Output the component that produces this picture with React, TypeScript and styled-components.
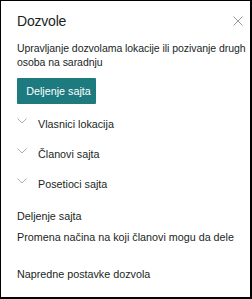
import React from 'react';
import styled, { createGlobalStyle } from 'styled-components';

const Global = createGlobalStyle`
  html, body {
    margin: 0;
    padding: 0;
    background: #fff;
  }
  body {
    font-family: "Liberation Sans", Arial, sans-serif;
    color: #201f1e;
  }
`;

const Panel = styled.div`
  box-sizing: border-box;
  width: 252px;
  height: 299px;
  border-style: solid;
  border-color: #000;
  border-width: 1px 2px 2px 1px;
  background: #fff;
  padding: 0 6px 0 16px;
  display: flex;
  flex-direction: column;
`;

const Header = styled.div`
  display: flex;
  align-items: center;
  justify-content: space-between;
  height: 40px;
`;

const Title = styled.h1`
  margin: 0;
  font-size: 14px;
  font-weight: 400;
  color: #201f1e;
  letter-spacing: -0.2px;
`;

const CloseButton = styled.button`
  border: 0;
  background: none;
  padding: 0;
  width: 12px;
  height: 12px;
  display: flex;
  align-items: center;
  justify-content: center;
  cursor: pointer;
`;

const Description = styled.p`
  margin: 0 -6px 0 0;
  font-size: 10.5px;
  line-height: 14px;
  letter-spacing: -0.05px;
  color: #201f1e;
`;

const PrimaryButton = styled.button`
  align-self: flex-start;
  margin-top: 9px;
  height: 26px;
  width: 79px;
  border: 0;
  border-radius: 1px;
  background: #1d7a7e;
  color: #fff;
  font-family: inherit;
  font-size: 10.75px;
  padding: 0 0 0 4px;
  text-align: center;
  white-space: nowrap;
`;

const GroupList = styled.ul`
  list-style: none;
  margin: 5px 0 0;
  padding: 0;
`;

const GroupRow = styled.li`
  display: flex;
  align-items: center;
  height: 30px;
  font-size: 10.75px;
  color: #201f1e;
`;

const Chevron = styled.span`
  display: flex;
  width: 21px;
  height: 30px;
  align-items: flex-start;
  padding-top: 9px;
  box-sizing: border-box;
`;

const LinkList = styled.div`
  display: flex;
  flex-direction: column;
  margin-top: 10px;
`;

const LinkItem = styled.a<{ $gap?: number }>`
  display: block;
  font-size: 10.75px;
  line-height: 14px;
  color: #201f1e;
  text-decoration: none;
  white-space: nowrap;
  margin-top: ${(p) => p.$gap ?? 0}px;
`;

const ChevronIcon = () => (
  <svg width="10" height="6" viewBox="0 0 10 6" fill="none">
    <path d="M0.5 0.5 L5 5 L9.5 0.5" stroke="#a6a6a6" strokeWidth="0.9" />
  </svg>
);

const CloseIcon = () => (
  <svg width="10" height="10" viewBox="0 0 10 10" fill="none">
    <path d="M0.5 0.5 L9.5 9.5 M9.5 0.5 L0.5 9.5" stroke="#9b9b9b" strokeWidth="1" />
  </svg>
);

const groups = ['Vlasnici lokacija', 'Članovi sajta', 'Posetioci sajta'];

export default function App() {
  return (
    <>
      <Global />
      <Panel>
        <Header>
          <Title>Dozvole</Title>
          <CloseButton aria-label="Zatvori">
            <CloseIcon />
          </CloseButton>
        </Header>
        <Description>
          Upravljanje dozvolama lokacije ili pozivanje drugh osoba na saradnju
        </Description>
        <PrimaryButton>Deljenje sajta</PrimaryButton>
        <GroupList>
          {groups.map((g) => (
            <GroupRow key={g}>
              <Chevron>
                <ChevronIcon />
              </Chevron>
              {g}
            </GroupRow>
          ))}
        </GroupList>
        <LinkList>
          <LinkItem href="#">Deljenje sajta</LinkItem>
          <LinkItem href="#" $gap={7}>
            Promena načina na koji članovi mogu da dele
          </LinkItem>
          <LinkItem href="#" $gap={23}>
            Napredne postavke dozvola
          </LinkItem>
        </LinkList>
      </Panel>
    </>
  );
}
